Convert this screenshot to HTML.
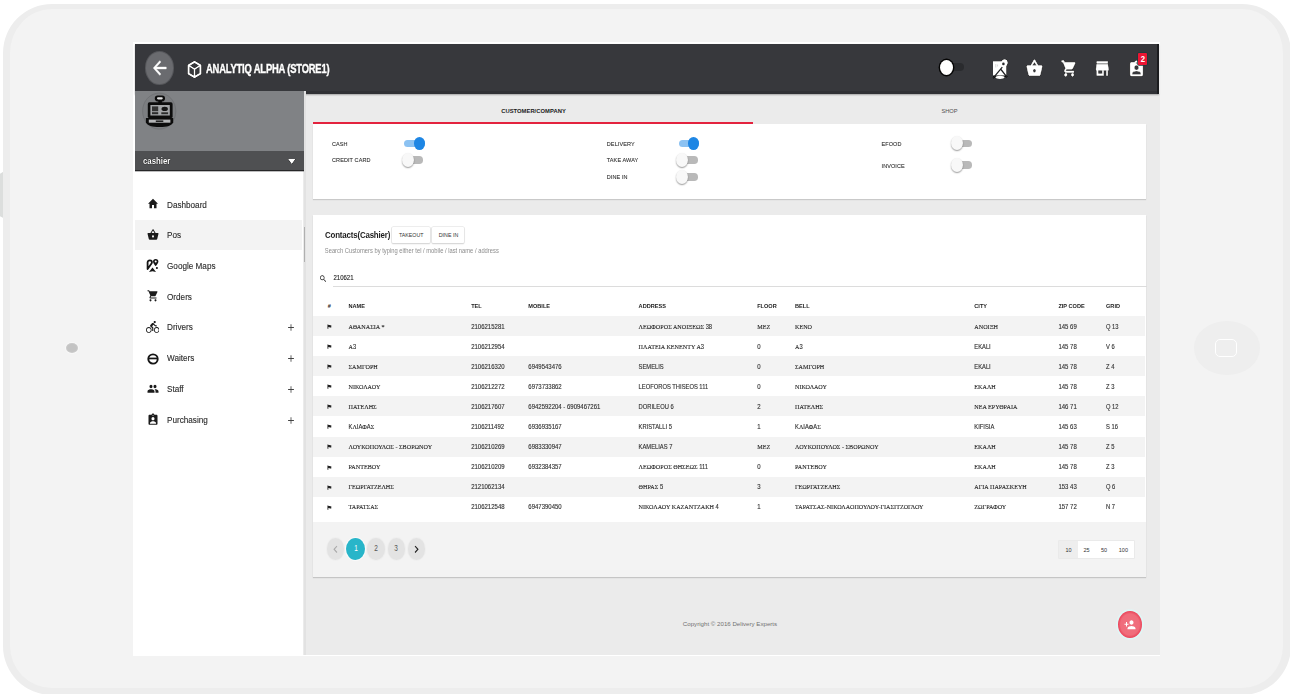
<!DOCTYPE html>
<html lang="el"><head><meta charset="utf-8"><title>Contacts (Cashier)</title>
<style>
html,body{margin:0;padding:0;background:#fff;}
body{width:1290px;height:694px;position:relative;overflow:hidden;font-family:"Liberation Sans",sans-serif;}
.a{position:absolute;display:block;}
.t{white-space:nowrap;line-height:12px;height:12px;font-size:5.500px;color:#444;}
.b{font-weight:bold;}
.ttl{font-weight:bold;color:#fff;font-size:13px;line-height:18px;height:18px;transform-origin:0 50%;transform:scaleX(.722);text-shadow:0 0 1px #000,0 0 1px #000;letter-spacing:-.25px;-webkit-text-stroke:.5px #fff}
.m{font-size:9.200px;color:#2b2b2b;-webkit-text-stroke:.12px #2b2b2b;transform-origin:0 50%;transform:scale(.888,1.07)}
.lab{font-size:5.500px;color:#333;letter-spacing:.1px;-webkit-text-stroke:.1px #333}
.h{font-size:8.800px;color:#1d1d1d;font-weight:bold;letter-spacing:-.2px;transform-origin:0 50%;transform:scale(.9,1.12)}
.sh{filter:drop-shadow(0 0 .7px #000) drop-shadow(0 0 .6px #000) drop-shadow(0 0 .4px #000)}
.sub{font-size:5.800px;color:#8c8c8c;}
.th{font-weight:bold;color:#222;font-size:5.600px;}
.c{font-size:5.800px;color:#333;-webkit-text-stroke:.12px #333}
.n{font-size:6px}
.c,.th,.lab,.sub{transform:scaleY(1.1)}
.gr{font-family:"Liberation Serif",serif;font-size:6.150px;color:#1f1f1f;-webkit-text-stroke:.1px #1f1f1f}
</style></head>
<body>
<div class="a" style="left:0.0px;top:171.8px;width:6.0px;height:46.2px;background:#dcdedd;clip-path:polygon(0 4%,55% 0,100% 0,100% 100%,55% 100%,0 96%)"></div>
<div class="a" style="left:3.200px;top:3.900px;width:1287.800px;height:691.100px;box-sizing:border-box;background:#f3f3f3;border:solid #ededed;border-width:5.200px 8.700px 7.200px 7.900px;border-radius:49px"></div>
<div class="a" style="left:66.7px;top:343.8px;width:10.4px;height:8.2px;border-radius:50%;background:#c3c3c3;box-shadow:0 0 0 1px #c9c9c9,0 0 0 2px #f8f8f8"></div>
<div class="a" style="left:1194.0px;top:321.0px;width:66.2px;height:53.6px;border-radius:50%;background:#eeeeee"></div>
<div class="a" style="left:1215.0px;top:339.4px;width:22.0px;height:17.5px;box-sizing:border-box;border:1.800px solid #fff;border-radius:5px"></div>
<div class="a" style="left:133.1px;top:41.9px;width:1026.5px;height:614.3px;background:#fff"></div>
<div class="a" style="left:303.0px;top:94.0px;width:856.5px;height:560.5px;background:#ebebeb"></div>
<div class="a" style="left:135.0px;top:43.9px;width:1023.8px;height:50.6px;background:#303135;box-shadow:0 1px 1.5px rgba(0,0,0,.3)"></div>
<div class="a" style="left:135.0px;top:43.9px;width:1023.8px;height:46.9px;background:#37383c"></div>
<div class="a" style="left:1156.9px;top:43.9px;width:1.9px;height:50.6px;background:#1b1c1f"></div>
<div class="a" style="left:145.7px;top:52.1px;width:27.8px;height:32.2px;border-radius:50%;background:#6a6b6f;box-shadow:0 0 0 1px #56575b"></div>
<svg class="a " style="left:149.8px;top:57.2px;width:19.5px;height:22.0px" viewBox="0 0 24 24" preserveAspectRatio="none"><path fill="#fff" stroke="#fff" stroke-width=".5" d="M20 11H7.83l5.59-5.59L12 4l-8 8 8 8 1.41-1.41L7.83 13H20v-2z"/></svg>
<svg class="a sh" style="left:187.200px;top:60.200px;width:15px;height:19px" viewBox="0 0 16 20"><path d="M8 1.800L14.300 5.600V14.400L8 18.200L1.700 14.400V5.600Z" fill="none" stroke="#fff" stroke-width="2.100" stroke-linejoin="round"/><path d="M1.700 5.600L8 9.600L14.300 5.600M8 9.600V18.200" fill="none" stroke="#fff" stroke-width="1.700"/></svg>
<div class="a t ttl" style="left:206.200px;top:59.800px;">ANALYTIQ ALPHA (STORE1)</div>
<div class="a" style="left:946.0px;top:62.8px;width:17.5px;height:8.6px;background:#2a2b2e;border-radius:4.300px"></div>
<div class="a" style="left:939.7px;top:59.6px;width:13.6px;height:15.8px;border-radius:50%;background:#fff;box-shadow:0 0 0 1.400px #050505"></div>
<svg class="a sh" style="left:991px;top:57px;width:19px;height:24px" viewBox="0 0 19 24"><path d="M2 4.200h8.500a3.300 3.300 0 0 1 6.300 1.200c0 1.200-.7 2.500-1.400 3.600V18.500H2z" fill="#fff"/><ellipse cx="9" cy="20.300" rx="4.600" ry="1.600" fill="#fff"/><circle cx="12.400" cy="6.900" r="1.300" fill="#2a2b2e"/><path d="M2.300 20.800L11.300 10.200M10 12.500l5.800 7.300" stroke="#1f2023" stroke-width="1.250" fill="none"/><path d="M4.800 7v3.500M6.600 7.500v2" stroke="#c9c9c9" stroke-width=".7"/></svg>
<svg class="a sh" style="left:1025.8px;top:58.1px;width:16.9px;height:20.3px" viewBox="0 0 24 24" preserveAspectRatio="none"><path fill="#fff" stroke="#fff" stroke-width=".7" d="M17.21 9l-4.38-6.56c-.19-.28-.51-.42-.83-.42-.32 0-.64.14-.83.43L6.79 9H2c-.55 0-1 .45-1 1 0 .09.01.18.04.27l2.54 9.27c.23.84 1 1.46 1.92 1.46h13c.92 0 1.69-.62 1.93-1.46l2.54-9.27L23 10c0-.55-.45-1-1-1h-4.79zM9 9l3-4.4L15 9H9zm3 8c-1.1 0-2-.9-2-2s.9-2 2-2 2 .9 2 2-.9 2-2 2z"/></svg>
<svg class="a sh" style="left:1060.8px;top:58.6px;width:16.3px;height:19.0px" viewBox="0 0 24 24" preserveAspectRatio="none"><path fill="#fff" stroke="#fff" stroke-width=".7" d="M7 18c-1.1 0-1.99.9-1.99 2S5.9 22 7 22s2-.9 2-2-.9-2-2-2zM1 2v2h2l3.6 7.59-1.35 2.45c-.16.28-.25.61-.25.96 0 1.1.9 2 2 2h12v-2H7.42c-.14 0-.25-.11-.25-.25l.03-.12.9-1.63h7.45c.75 0 1.41-.41 1.75-1.03l3.58-6.49c.08-.14.12-.31.12-.48 0-.55-.45-1-1-1H5.21l-.94-2H1zm16 16c-1.1 0-1.99.9-1.99 2s.89 2 1.99 2 2-.9 2-2-.9-2-2-2z"/></svg>
<svg class="a sh" style="left:1094.3px;top:57.5px;width:16.5px;height:21.1px" viewBox="0 0 24 24" preserveAspectRatio="none"><path fill="#fff" stroke="#fff" stroke-width=".7" d="M20 4H4v2h16V4zm1 10v-2l-1-5H4l-1 5v2h1v6h10v-6h4v6h2v-6h1zm-9 4H6v-4h6v4z"/></svg>
<svg class="a sh" style="left:1128.0px;top:59.5px;width:17.0px;height:18.4px" viewBox="0 0 24 24" preserveAspectRatio="none"><path fill="#fff" stroke="#fff" stroke-width=".7" d="M19 3h-4.18C14.4 1.84 13.3 1 12 1c-1.3 0-2.4.84-2.82 2H5c-1.1 0-2 .9-2 2v14c0 1.1.9 2 2 2h14c1.1 0 2-.9 2-2V5c0-1.1-.9-2-2-2zm-7 0c.55 0 1 .45 1 1s-.45 1-1 1-1-.45-1-1 .45-1 1-1zm0 4c1.66 0 3 1.34 3 3s-1.34 3-3 3-3-1.34-3-3 1.34-3 3-3zm6 12H6v-1.4c0-2 4-3.1 6-3.1s6 1.1 6 3.1V19z"/></svg>
<div class="a" style="left:1137.8px;top:52.9px;width:9.6px;height:12.3px;background:#ec1533;border-radius:1px;box-shadow:0 0 0 .8px #1e3a3c"></div>
<div class="a t b" style="left:1142.6px;top:53.1px;transform:translateX(-50%);color:#fff;font-size:9px;transform:translateX(-50%) scaleX(.86)">2</div>
<div class="a" style="left:303.5px;top:90.5px;width:2.2px;height:564.0px;background:#e2e2e2"></div>
<div class="a" style="left:304.2px;top:227.0px;width:1.3px;height:35.0px;background:#b0b0b0"></div>
<div class="a" style="left:135.0px;top:90.5px;width:168.5px;height:60.3px;background:#808285"></div>
<div class="a" style="left:135.0px;top:150.6px;width:168.5px;height:19.6px;background:#4f5052;box-shadow:0 1.300px 0 #262628"></div>
<svg class="a" style="left:142px;top:92px;width:35px;height:38px" viewBox="0 0 35 38"><ellipse cx="17.200" cy="19.100" rx="16.600" ry="18" fill="#7c7e81" stroke="#727477" stroke-width="1"/><g fill="#0c0c0c"><rect x="12.800" y="3.400" width="10.200" height="6" rx="2.800"/><rect x="16.300" y="9" width="3.600" height="2.500"/><rect x="5.800" y="10.300" width="24.800" height="15.800" rx="1.600"/><path d="M3.900 26h27.300v4.500c-1.500 3-6 4.600-13.600 4.600S5.400 33.500 3.900 30.500z"/></g><rect x="15" y="5.200" width="5.800" height="2.200" rx="1.100" fill="#e2e2e2"/><rect x="8.400" y="13" width="19.400" height="10.500" fill="#a3a5a7"/><g fill="#161616"><rect x="10" y="14.400" width="6.200" height="4.800" opacity=".8"/><rect x="10" y="20.200" width="6.200" height="2" opacity=".85"/><ellipse cx="22.700" cy="16.900" rx="3.200" ry="2.100"/><rect x="19.300" y="20.300" width="6.800" height="1.900" opacity=".85"/></g><rect x="6.800" y="27.600" width="21.600" height="3.100" fill="#b4b5b7"/><rect x="13.800" y="28.500" width="7.500" height="1.400" fill="#111"/><path d="M8 31.400c2.500 1.100 5.500 1.500 9.600 1.500s7.100-.4 9.600-1.500v-.7H8z" fill="#b4b5b7" opacity=".0"/></svg>
<div class="a t b" style="left:143.3px;top:154.7px;color:#fff;font-size:9.900px;transform-origin:0 50%;transform:scaleX(.79);text-shadow:0 0 1px #000,0 0 1px #000">cashier</div>
<svg class="a sh" style="left:283.1px;top:149.4px;width:17.5px;height:24.0px" viewBox="0 0 24 24" preserveAspectRatio="none"><path fill="#fff"  d="M7 10l5 5 5-5z"/></svg>
<div class="a" style="left:135.0px;top:219.6px;width:167.3px;height:30.1px;background:#f3f3f3"></div>
<svg class="a " style="left:146.7px;top:197.4px;width:12.0px;height:13.5px" viewBox="0 0 24 24" preserveAspectRatio="none"><path fill="#1b1b1b"  d="M10 20v-6h4v6h5v-8h3L12 3 2 12h3v8z"/></svg>
<div class="a t m" style="left:167.4px;top:198.6px;">Dashboard</div>
<svg class="a " style="left:146.7px;top:227.8px;width:12.0px;height:13.5px" viewBox="0 0 24 24" preserveAspectRatio="none"><path fill="#1b1b1b"  d="M17.21 9l-4.38-6.56c-.19-.28-.51-.42-.83-.42-.32 0-.64.14-.83.43L6.79 9H2c-.55 0-1 .45-1 1 0 .09.01.18.04.27l2.54 9.27c.23.84 1 1.46 1.92 1.46h13c.92 0 1.69-.62 1.93-1.46l2.54-9.27L23 10c0-.55-.45-1-1-1h-4.79zM9 9l3-4.4L15 9H9zm3 8c-1.1 0-2-.9-2-2s.9-2 2-2 2 .9 2 2-.9 2-2 2z"/></svg>
<div class="a t m" style="left:167.4px;top:228.9px;">Pos</div>
<svg class="a" style="left:145px;top:257.0px;width:15px;height:16px" viewBox="0 0 15 16"><path d="M2.600 12V5.300C2.600 3.500 4.600 3.100 6 3.600 7.100 4.100 7.200 5.500 6.500 6.500z" fill="none" stroke="#151515" stroke-width="1.800" stroke-linejoin="round"/><path d="M10.700 1.900a2.700 2.700 0 0 1 2.700 2.700c0 2-2.700 4.700-2.700 4.700S8 6.600 8 4.600a2.700 2.700 0 0 1 2.700-2.700z" fill="#151515"/><circle cx="10.700" cy="4.600" r="1" fill="#fff"/><circle cx="11.900" cy="11" r="1.050" fill="#151515"/><path d="M4 15L7.500 10.400 11 15 7.500 14.300z" fill="#151515"/></svg>
<div class="a t m" style="left:167.4px;top:260.2px;">Google Maps</div>
<svg class="a " style="left:146.7px;top:289.4px;width:12.0px;height:13.5px" viewBox="0 0 24 24" preserveAspectRatio="none"><path fill="#1b1b1b"  d="M7 18c-1.1 0-1.99.9-1.99 2S5.9 22 7 22s2-.9 2-2-.9-2-2-2zM1 2v2h2l3.6 7.59-1.35 2.45c-.16.28-.25.61-.25.96 0 1.1.9 2 2 2h12v-2H7.42c-.14 0-.25-.11-.25-.25l.03-.12.9-1.63h7.45c.75 0 1.41-.41 1.75-1.03l3.58-6.49c.08-.14.12-.31.12-.48 0-.55-.45-1-1-1H5.21l-.94-2H1zm16 16c-1.1 0-1.99.9-1.99 2s.89 2 1.99 2 2-.9 2-2-.9-2-2-2z"/></svg>
<div class="a t m" style="left:167.4px;top:290.5px;">Orders</div>
<svg class="a " style="left:145.9px;top:319.9px;width:13.5px;height:14.0px" viewBox="0 0 24 24" preserveAspectRatio="none"><path fill="#1b1b1b"  d="M15.5 5.500c1.100 0 2-.9 2-2s-.9-2-2-2-2 .9-2 2 .9 2 2 2zM5 12c-2.800 0-5 2.200-5 5s2.200 5 5 5 5-2.200 5-5-2.200-5-5-5zm0 8.500c-1.900 0-3.500-1.600-3.500-3.500s1.600-3.500 3.500-3.500 3.500 1.600 3.500 3.500-1.600 3.500-3.500 3.500zm5.800-10l2.400-2.400.8.8c1.300 1.300 3 2.100 5.100 2.100V9c-1.500 0-2.700-.6-3.600-1.500l-1.900-1.900c-.5-.4-1-.6-1.600-.6s-1.100.2-1.400.6L7.800 8.400c-.4.4-.6.9-.6 1.400 0 .6.200 1.100.6 1.400L11 14v5h2v-6.200l-2.200-2.300zM19 12c-2.800 0-5 2.200-5 5s2.200 5 5 5 5-2.200 5-5-2.200-5-5-5zm0 8.500c-1.900 0-3.500-1.600-3.500-3.500s1.600-3.500 3.500-3.500 3.500 1.600 3.500 3.500-1.600 3.500-3.500 3.500z"/></svg>
<div class="a t m" style="left:167.4px;top:321.3px;">Drivers</div>
<svg class="a " style="left:286.0px;top:322.1px;width:10.0px;height:11.0px" viewBox="0 0 24 24" preserveAspectRatio="none"><path fill="#444"  d="M19 13h-6v6h-2v-6H5v-2h6V5h2v6h6v2z"/></svg>
<svg class="a" style="left:146.600px;top:352.5px;width:12px;height:12px" viewBox="0 0 12 12"><ellipse cx="6" cy="6" rx="4.700" ry="4.600" fill="none" stroke="#151515" stroke-width="1.900"/><path d="M1.500 4.600h9v1.700h-9z" fill="#151515"/></svg>
<div class="a t m" style="left:167.4px;top:352.2px;">Waiters</div>
<svg class="a " style="left:286.0px;top:353.0px;width:10.0px;height:11.0px" viewBox="0 0 24 24" preserveAspectRatio="none"><path fill="#444"  d="M19 13h-6v6h-2v-6H5v-2h6V5h2v6h6v2z"/></svg>
<svg class="a " style="left:146.7px;top:381.8px;width:12.0px;height:13.5px" viewBox="0 0 24 24" preserveAspectRatio="none"><path fill="#1b1b1b"  d="M16 11c1.66 0 2.99-1.34 2.99-3S17.66 5 16 5c-1.66 0-3 1.34-3 3s1.34 3 3 3zm-8 0c1.66 0 2.99-1.34 2.99-3S9.66 5 8 5C6.34 5 5 6.34 5 8s1.34 3 3 3zm0 2c-2.33 0-7 1.17-7 3.5V19h14v-2.5c0-2.33-4.67-3.500-7-3.500zm8 0c-.29 0-.62.02-.97.05 1.16.84 1.970 1.970 1.970 3.450V19h6v-2.500c0-2.330-4.670-3.500-7-3.500z"/></svg>
<div class="a t m" style="left:167.4px;top:382.9px;">Staff</div>
<svg class="a " style="left:286.0px;top:383.7px;width:10.0px;height:11.0px" viewBox="0 0 24 24" preserveAspectRatio="none"><path fill="#444"  d="M19 13h-6v6h-2v-6H5v-2h6V5h2v6h6v2z"/></svg>
<svg class="a " style="left:146.7px;top:412.9px;width:12.0px;height:13.5px" viewBox="0 0 24 24" preserveAspectRatio="none"><path fill="#1b1b1b"  d="M19 3h-4.18C14.4 1.84 13.3 1 12 1c-1.3 0-2.4.84-2.82 2H5c-1.1 0-2 .9-2 2v14c0 1.1.9 2 2 2h14c1.1 0 2-.9 2-2V5c0-1.1-.9-2-2-2zm-7 0c.55 0 1 .45 1 1s-.45 1-1 1-1-.45-1-1 .45-1 1-1zm0 4c1.66 0 3 1.34 3 3s-1.34 3-3 3-3-1.34-3-3 1.34-3 3-3zm6 12H6v-1.4c0-2 4-3.1 6-3.1s6 1.1 6 3.1V19z"/></svg>
<div class="a t m" style="left:167.4px;top:414.0px;">Purchasing</div>
<svg class="a " style="left:286.0px;top:414.8px;width:10.0px;height:11.0px" viewBox="0 0 24 24" preserveAspectRatio="none"><path fill="#444"  d="M19 13h-6v6h-2v-6H5v-2h6V5h2v6h6v2z"/></svg>
<div class="a t b" style="left:533.5px;top:105.3px;transform:translateX(-50%);color:#1a1a1a;font-size:5.800px;letter-spacing:.05px">CUSTOMER/COMPANY</div>
<div class="a t " style="left:949.5px;top:105.3px;transform:translateX(-50%);color:#505050;font-size:5.700px">SHOP</div>
<div class="a" style="left:313.1px;top:123.8px;width:833.3px;height:75.3px;background:#fff;box-shadow:0 1px 1px rgba(0,0,0,.14)"></div>
<div class="a" style="left:313.1px;top:121.6px;width:440.4px;height:2.6px;background:#e3233e"></div>
<div class="a t lab" style="left:332.0px;top:137.8px;">CASH</div>
<div class="a t lab" style="left:332.0px;top:154.0px;">CREDIT CARD</div>
<div class="a t lab" style="left:606.8px;top:137.8px;">DELIVERY</div>
<div class="a t lab" style="left:606.8px;top:154.0px;">TAKE AWAY</div>
<div class="a t lab" style="left:606.8px;top:171.0px;">DINE IN</div>
<div class="a t lab" style="left:881.5px;top:137.8px;">EFOOD</div>
<div class="a t lab" style="left:881.5px;top:159.6px;">INVOICE</div>
<div class="a" style="left:404.4px;top:139.6px;width:20.5px;height:7.2px;background:#8cc2f2;border-radius:3.600px"></div>
<div class="a" style="left:413.7px;top:136.5px;width:11.4px;height:13.0px;border-radius:50%;background:#1e86e4"></div>
<div class="a" style="left:407.9px;top:156.3px;width:15.2px;height:7.6px;background:#b9b9b9;border-radius:3.800px"></div>
<div class="a" style="left:401.9px;top:153.0px;width:12.0px;height:14.0px;border-radius:50%;background:#f8f8f8;box-shadow:0 1px 1.500px rgba(0,0,0,.4)"></div>
<div class="a" style="left:678.8px;top:139.6px;width:20.5px;height:7.2px;background:#8cc2f2;border-radius:3.600px"></div>
<div class="a" style="left:688.1px;top:136.5px;width:11.4px;height:13.0px;border-radius:50%;background:#1e86e4"></div>
<div class="a" style="left:682.4px;top:156.3px;width:15.2px;height:7.6px;background:#b9b9b9;border-radius:3.800px"></div>
<div class="a" style="left:676.4px;top:153.0px;width:12.0px;height:14.0px;border-radius:50%;background:#f8f8f8;box-shadow:0 1px 1.500px rgba(0,0,0,.4)"></div>
<div class="a" style="left:682.4px;top:173.3px;width:15.2px;height:7.6px;background:#b9b9b9;border-radius:3.800px"></div>
<div class="a" style="left:676.4px;top:170.0px;width:12.0px;height:14.0px;border-radius:50%;background:#f8f8f8;box-shadow:0 1px 1.500px rgba(0,0,0,.4)"></div>
<div class="a" style="left:956.7px;top:139.7px;width:15.2px;height:7.6px;background:#b9b9b9;border-radius:3.800px"></div>
<div class="a" style="left:950.7px;top:136.4px;width:12.0px;height:14.0px;border-radius:50%;background:#f8f8f8;box-shadow:0 1px 1.500px rgba(0,0,0,.4)"></div>
<div class="a" style="left:956.7px;top:161.3px;width:15.2px;height:7.6px;background:#b9b9b9;border-radius:3.800px"></div>
<div class="a" style="left:950.7px;top:158.0px;width:12.0px;height:14.0px;border-radius:50%;background:#f8f8f8;box-shadow:0 1px 1.500px rgba(0,0,0,.4)"></div>
<div class="a" style="left:313.1px;top:215.0px;width:833.3px;height:362.4px;background:#f3f3f3;box-shadow:0 1px 1px rgba(0,0,0,.16)"></div>
<div class="a" style="left:313.1px;top:215.0px;width:833.3px;height:307.3px;background:#fff"></div>
<div class="a t h" style="left:324.8px;top:228.7px;">Contacts(Cashier)</div>
<div class="a" style="left:392.3px;top:226.8px;width:37.7px;height:16.6px;background:#fff;box-shadow:0 0 0 .6px #dcdcdc,0 1px 1.500px rgba(0,0,0,.2);border-radius:1px"></div>
<div class="a t " style="left:411.2px;top:229.3px;transform:translateX(-50%);font-size:5.300px;color:#333">TAKEOUT</div>
<div class="a" style="left:432.4px;top:226.8px;width:32.1px;height:16.6px;background:#fff;box-shadow:0 0 0 .6px #dcdcdc,0 1px 1.500px rgba(0,0,0,.2);border-radius:1px"></div>
<div class="a t " style="left:448.5px;top:229.3px;transform:translateX(-50%);font-size:5.300px;color:#333">DINE IN</div>
<div class="a t sub" style="left:324.8px;top:244.6px;">Search Customers by typing either tel / mobile / last name / address</div>
<svg class="a " style="left:319.2px;top:274.4px;width:8.3px;height:9.3px" viewBox="0 0 24 24" preserveAspectRatio="none"><path fill="#222"  d="M15.5 14h-.79l-.28-.27C15.410 12.590 16 11.110 16 9.500 16 5.910 13.090 3 9.500 3S3 5.910 3 9.500 5.910 16 9.500 16c1.610 0 3.090-.59 4.230-1.570l.27.28v.79l5 4.990L20.490 19l-4.990-5zm-6 0C7.010 14 5 11.990 5 9.500S7.010 5 9.500 5 14 7.010 14 9.500 11.990 14 9.500 14z"/></svg>
<div class="a t c" style="left:333.5px;top:272.0px;color:#222;font-size:6px">210621</div>
<div class="a" style="left:333.0px;top:285.8px;width:813.5px;height:1.0px;background:#dcdcdc"></div>
<div class="a t th" style="left:329.2px;top:300.2px;transform:translateX(-50%);">#</div>
<div class="a t th" style="left:348.5px;top:300.2px;">NAME</div>
<div class="a t th" style="left:471.2px;top:300.2px;">TEL</div>
<div class="a t th" style="left:528.3px;top:300.2px;">MOBILE</div>
<div class="a t th" style="left:638.6px;top:300.2px;">ADDRESS</div>
<div class="a t th" style="left:757.2px;top:300.2px;">FLOOR</div>
<div class="a t th" style="left:795.0px;top:300.2px;">BELL</div>
<div class="a t th" style="left:974.3px;top:300.2px;">CITY</div>
<div class="a t th" style="left:1058.4px;top:300.2px;">ZIP CODE</div>
<div class="a t th" style="left:1106.0px;top:300.2px;">GRID</div>
<div class="a" style="left:313.1px;top:316.0px;width:831.6px;height:20.1px;background:#f3f3f3"></div>
<svg class="a" style="left:327.300px;top:323.9px;width:4.600px;height:5.200px" viewBox="0 0 6 6"><path d="M.6 .3h1.200v5.400H.6zM1.800 .8h1.800l.4 .600h1.600v2.800H3.400l-.4-.6H1.800z" fill="#222"/></svg>
<div class="a t c" style="left:348.5px;top:320.5px;"><span class="gr">ΑΘΑΝΑΣΙΑ *</span></div>
<div class="a t c n" style="left:471.2px;top:320.5px;">2106215281</div>
<div class="a t c" style="left:638.6px;top:320.5px;"><span class="gr">ΛΕΩΦΟΡΟΣ ΑΝΟΙΞΕΩΣ </span>38</div>
<div class="a t c" style="left:757.2px;top:320.5px;"><span class="gr">ΜΕΖ</span></div>
<div class="a t c" style="left:795.0px;top:320.5px;"><span class="gr">ΚΕΝΟ</span></div>
<div class="a t c" style="left:974.3px;top:320.5px;"><span class="gr">ΑΝΟΙΞΗ</span></div>
<div class="a t c n" style="left:1058.4px;top:320.5px;">145 69</div>
<div class="a t c" style="left:1106.0px;top:320.5px;">Q 13</div>
<svg class="a" style="left:327.300px;top:344.0px;width:4.600px;height:5.200px" viewBox="0 0 6 6"><path d="M.6 .3h1.200v5.400H.6zM1.800 .8h1.800l.4 .600h1.600v2.800H3.400l-.4-.6H1.800z" fill="#222"/></svg>
<div class="a t c" style="left:348.5px;top:340.6px;"><span class="gr">Α</span>3</div>
<div class="a t c n" style="left:471.2px;top:340.6px;">2106212954</div>
<div class="a t c" style="left:638.6px;top:340.6px;"><span class="gr">ΠΛΑΤΕΙΑ ΚΕΝΕΝΤΥ Α</span>3</div>
<div class="a t c n" style="left:757.2px;top:340.6px;">0</div>
<div class="a t c" style="left:795.0px;top:340.6px;"><span class="gr">Α</span>3</div>
<div class="a t c" style="left:974.3px;top:340.6px;">EKALI</div>
<div class="a t c n" style="left:1058.4px;top:340.6px;">145 78</div>
<div class="a t c" style="left:1106.0px;top:340.6px;">V 6</div>
<div class="a" style="left:313.1px;top:356.2px;width:831.6px;height:20.1px;background:#f3f3f3"></div>
<svg class="a" style="left:327.300px;top:364.1px;width:4.600px;height:5.200px" viewBox="0 0 6 6"><path d="M.6 .3h1.200v5.400H.6zM1.800 .8h1.800l.4 .600h1.600v2.800H3.400l-.4-.6H1.800z" fill="#222"/></svg>
<div class="a t c" style="left:348.5px;top:360.7px;"><span class="gr">ΣΑΜΓΟΡΗ</span></div>
<div class="a t c n" style="left:471.2px;top:360.7px;">2106216320</div>
<div class="a t c n" style="left:528.3px;top:360.7px;">6949543476</div>
<div class="a t c" style="left:638.6px;top:360.7px;">SEMELIS</div>
<div class="a t c n" style="left:757.2px;top:360.7px;">0</div>
<div class="a t c" style="left:795.0px;top:360.7px;"><span class="gr">ΣΑΜΓΟΡΗ</span></div>
<div class="a t c" style="left:974.3px;top:360.7px;">EKALI</div>
<div class="a t c n" style="left:1058.4px;top:360.7px;">145 78</div>
<div class="a t c" style="left:1106.0px;top:360.7px;">Z 4</div>
<svg class="a" style="left:327.300px;top:384.1px;width:4.600px;height:5.200px" viewBox="0 0 6 6"><path d="M.6 .3h1.200v5.400H.6zM1.800 .8h1.800l.4 .600h1.600v2.800H3.400l-.4-.6H1.800z" fill="#222"/></svg>
<div class="a t c" style="left:348.5px;top:380.7px;"><span class="gr">ΝΙΚΟΛΑΟΥ</span></div>
<div class="a t c n" style="left:471.2px;top:380.7px;">2106212272</div>
<div class="a t c n" style="left:528.3px;top:380.7px;">6973733862</div>
<div class="a t c" style="left:638.6px;top:380.7px;">LEOFOROS THISEOS 111</div>
<div class="a t c n" style="left:757.2px;top:380.7px;">0</div>
<div class="a t c" style="left:795.0px;top:380.7px;"><span class="gr">ΝΙΚΟΛΑΟΥ</span></div>
<div class="a t c" style="left:974.3px;top:380.7px;"><span class="gr">ΕΚΑΛΗ</span></div>
<div class="a t c n" style="left:1058.4px;top:380.7px;">145 78</div>
<div class="a t c" style="left:1106.0px;top:380.7px;">Z 3</div>
<div class="a" style="left:313.1px;top:396.3px;width:831.6px;height:20.1px;background:#f3f3f3"></div>
<svg class="a" style="left:327.300px;top:404.2px;width:4.600px;height:5.200px" viewBox="0 0 6 6"><path d="M.6 .3h1.200v5.400H.6zM1.800 .8h1.800l.4 .600h1.600v2.800H3.400l-.4-.6H1.800z" fill="#222"/></svg>
<div class="a t c" style="left:348.5px;top:400.8px;"><span class="gr">ΠΑΤΕΛΗΣ</span></div>
<div class="a t c n" style="left:471.2px;top:400.8px;">2106217607</div>
<div class="a t c n" style="left:528.3px;top:400.8px;">6942592204 - 6909467261</div>
<div class="a t c" style="left:638.6px;top:400.8px;">DORILEOU 6</div>
<div class="a t c n" style="left:757.2px;top:400.8px;">2</div>
<div class="a t c" style="left:795.0px;top:400.8px;"><span class="gr">ΠΑΤΕΛΗΣ</span></div>
<div class="a t c" style="left:974.3px;top:400.8px;"><span class="gr">ΝΕΑ ΕΡΥΘΡΑΙΑ</span></div>
<div class="a t c n" style="left:1058.4px;top:400.8px;">146 71</div>
<div class="a t c" style="left:1106.0px;top:400.8px;">Q 12</div>
<svg class="a" style="left:327.300px;top:424.3px;width:4.600px;height:5.200px" viewBox="0 0 6 6"><path d="M.6 .3h1.200v5.400H.6zM1.800 .8h1.800l.4 .600h1.600v2.800H3.400l-.4-.6H1.800z" fill="#222"/></svg>
<div class="a t c" style="left:348.5px;top:420.9px;">K<span class="gr">Λ</span>IA<span class="gr">Φ</span>A<span class="gr">Σ</span></div>
<div class="a t c n" style="left:471.2px;top:420.9px;">2106211492</div>
<div class="a t c n" style="left:528.3px;top:420.9px;">6936935167</div>
<div class="a t c" style="left:638.6px;top:420.9px;">KRISTALLI 5</div>
<div class="a t c n" style="left:757.2px;top:420.9px;">1</div>
<div class="a t c" style="left:795.0px;top:420.9px;">K<span class="gr">Λ</span>IA<span class="gr">Φ</span>A<span class="gr">Σ</span></div>
<div class="a t c" style="left:974.3px;top:420.9px;">KIFISIA</div>
<div class="a t c n" style="left:1058.4px;top:420.9px;">145 63</div>
<div class="a t c" style="left:1106.0px;top:420.9px;">S 16</div>
<div class="a" style="left:313.1px;top:436.5px;width:831.6px;height:20.1px;background:#f3f3f3"></div>
<svg class="a" style="left:327.300px;top:444.4px;width:4.600px;height:5.200px" viewBox="0 0 6 6"><path d="M.6 .3h1.200v5.400H.6zM1.800 .8h1.800l.4 .600h1.600v2.800H3.400l-.4-.6H1.800z" fill="#222"/></svg>
<div class="a t c" style="left:348.5px;top:441.0px;"><span class="gr">ΛΟΥΚΟΠΟΥΛΟΣ - ΣΒΟΡΩΝΟΥ</span></div>
<div class="a t c n" style="left:471.2px;top:441.0px;">2106210269</div>
<div class="a t c n" style="left:528.3px;top:441.0px;">6983330947</div>
<div class="a t c" style="left:638.6px;top:441.0px;">KAMELIAS 7</div>
<div class="a t c" style="left:757.2px;top:441.0px;"><span class="gr">ΜΕΖ</span></div>
<div class="a t c" style="left:795.0px;top:441.0px;"><span class="gr">ΛΟΥΚΟΠΟΥΛΟΣ - ΣΒΟΡΩΝΟΥ</span></div>
<div class="a t c" style="left:974.3px;top:441.0px;"><span class="gr">ΕΚΑΛΗ</span></div>
<div class="a t c n" style="left:1058.4px;top:441.0px;">145 78</div>
<div class="a t c" style="left:1106.0px;top:441.0px;">Z 5</div>
<svg class="a" style="left:327.300px;top:464.5px;width:4.600px;height:5.200px" viewBox="0 0 6 6"><path d="M.6 .3h1.200v5.400H.6zM1.800 .8h1.800l.4 .600h1.600v2.800H3.400l-.4-.6H1.800z" fill="#222"/></svg>
<div class="a t c" style="left:348.5px;top:461.1px;"><span class="gr">ΡΑΝΤΕΒΟΥ</span></div>
<div class="a t c n" style="left:471.2px;top:461.1px;">2106210209</div>
<div class="a t c n" style="left:528.3px;top:461.1px;">6932384357</div>
<div class="a t c" style="left:638.6px;top:461.1px;"><span class="gr">ΛΕΩΦΟΡΟΣ ΘΗΣΕΩΣ </span>111</div>
<div class="a t c n" style="left:757.2px;top:461.1px;">0</div>
<div class="a t c" style="left:795.0px;top:461.1px;"><span class="gr">ΡΑΝΤΕΒΟΥ</span></div>
<div class="a t c" style="left:974.3px;top:461.1px;"><span class="gr">ΕΚΑΛΗ</span></div>
<div class="a t c n" style="left:1058.4px;top:461.1px;">145 78</div>
<div class="a t c" style="left:1106.0px;top:461.1px;">Z 3</div>
<div class="a" style="left:313.1px;top:476.6px;width:831.6px;height:20.1px;background:#f3f3f3"></div>
<svg class="a" style="left:327.300px;top:484.5px;width:4.600px;height:5.200px" viewBox="0 0 6 6"><path d="M.6 .3h1.200v5.400H.6zM1.800 .8h1.800l.4 .600h1.600v2.800H3.400l-.4-.6H1.800z" fill="#222"/></svg>
<div class="a t c" style="left:348.5px;top:481.1px;"><span class="gr">ΓΕΩΡΓΑΤΖΕΛΗΣ</span></div>
<div class="a t c n" style="left:471.2px;top:481.1px;">2121062134</div>
<div class="a t c" style="left:638.6px;top:481.1px;"><span class="gr">ΘΗΡΑΣ </span>5</div>
<div class="a t c n" style="left:757.2px;top:481.1px;">3</div>
<div class="a t c" style="left:795.0px;top:481.1px;"><span class="gr">ΓΕΩΡΓΑΤΖΕΛΗΣ</span></div>
<div class="a t c" style="left:974.3px;top:481.1px;"><span class="gr">ΑΓΙΑ ΠΑΡΑΣΚΕΥΗ</span></div>
<div class="a t c n" style="left:1058.4px;top:481.1px;">153 43</div>
<div class="a t c" style="left:1106.0px;top:481.1px;">Q 6</div>
<svg class="a" style="left:327.300px;top:504.6px;width:4.600px;height:5.200px" viewBox="0 0 6 6"><path d="M.6 .3h1.200v5.400H.6zM1.800 .8h1.800l.4 .600h1.600v2.800H3.400l-.4-.6H1.800z" fill="#222"/></svg>
<div class="a t c" style="left:348.5px;top:501.2px;"><span class="gr">ΤΑΡΑΤΣΑΣ</span></div>
<div class="a t c n" style="left:471.2px;top:501.2px;">2106212548</div>
<div class="a t c n" style="left:528.3px;top:501.2px;">6947390450</div>
<div class="a t c" style="left:638.6px;top:501.2px;"><span class="gr">ΝΙΚΟΛΑΟΥ ΚΑΖΑΝΤΖΑΚΗ </span>4</div>
<div class="a t c n" style="left:757.2px;top:501.2px;">1</div>
<div class="a t c" style="left:795.0px;top:501.2px;"><span class="gr">ΤΑΡΑΤΣΑΣ-ΝΙΚΟΛΑΟΠΟΥΛΟΥ-ΓΙΑΣΙΤΖΟΓΛΟΥ</span></div>
<div class="a t c" style="left:974.3px;top:501.2px;"><span class="gr">ΖΩΓΡΑΦΟΥ</span></div>
<div class="a t c n" style="left:1058.4px;top:501.2px;">157 72</div>
<div class="a t c" style="left:1106.0px;top:501.2px;">N 7</div>
<div class="a" style="left:327.0px;top:538.1px;width:17.4px;height:21.6px;border-radius:50%;background:#e3e3e3;box-shadow:0 0 0 1px #efefef"></div>
<div class="a" style="left:346.1px;top:537.9px;width:19.2px;height:22.0px;border-radius:50%;background:#28b5c9;box-shadow:0 0 0 1px #fafafa"></div>
<div class="a" style="left:367.3px;top:538.1px;width:17.4px;height:21.6px;border-radius:50%;background:#e3e3e3;box-shadow:0 0 0 1px #efefef"></div>
<div class="a" style="left:387.5px;top:538.1px;width:17.4px;height:21.6px;border-radius:50%;background:#e3e3e3;box-shadow:0 0 0 1px #efefef"></div>
<div class="a" style="left:407.8px;top:538.1px;width:17.4px;height:21.6px;border-radius:50%;background:#e3e3e3;box-shadow:0 0 0 1px #efefef"></div>
<svg class="a " style="left:329.1px;top:541.6px;width:13.0px;height:14.5px" viewBox="0 0 24 24" preserveAspectRatio="none"><path fill="#aaa"  d="M15.410 7.410L14 6l-6 6 6 6 1.410-1.410L10.830 12z"/></svg>
<div class="a t " style="left:355.7px;top:543.2px;transform:translateX(-50%);color:#fff;font-size:7.600px;transform:translateX(-50%) scale(.85,1.12)">1</div>
<div class="a t " style="left:376.0px;top:543.2px;transform:translateX(-50%);color:#555;font-size:7.600px;transform:translateX(-50%) scale(.85,1.12)">2</div>
<div class="a t " style="left:396.2px;top:543.2px;transform:translateX(-50%);color:#555;font-size:7.600px;transform:translateX(-50%) scale(.85,1.12)">3</div>
<svg class="a " style="left:410.4px;top:541.6px;width:13.0px;height:14.5px" viewBox="0 0 24 24" preserveAspectRatio="none"><path fill="#222"  d="M10 6L8.590 7.410 13.170 12l-4.580 4.590L10 18l6-6z"/></svg>
<div class="a" style="left:1059.3px;top:540.8px;width:74.6px;height:16.9px;background:#fff;box-shadow:0 0 0 .7px #e6e6e6"></div>
<div class="a" style="left:1059.3px;top:540.8px;width:18.7px;height:16.9px;background:#eeeeee"></div>
<div class="a t " style="left:1068.5px;top:544.0px;transform:translateX(-50%);color:#333;font-size:5.500px">10</div>
<div class="a t " style="left:1086.5px;top:544.0px;transform:translateX(-50%);color:#333;font-size:5.500px">25</div>
<div class="a t " style="left:1104.0px;top:544.0px;transform:translateX(-50%);color:#333;font-size:5.500px">50</div>
<div class="a t " style="left:1123.4px;top:544.0px;transform:translateX(-50%);color:#333;font-size:5.500px">100</div>
<div class="a t " style="left:730.0px;top:618.4px;transform:translateX(-50%);color:#727272;font-size:6.150px">Copyright © 2016 Delivery Experts</div>
<div class="a" style="left:1117.9px;top:610.7px;width:24.4px;height:27.6px;border-radius:50%;background:radial-gradient(closest-side,#f0717f 0,#f06c7b 78%,#ea4258 100%);box-shadow:0 0 0 1.800px #e0f6f6"></div>
<svg class="a " style="left:1123.6px;top:618.0px;width:12.0px;height:13.5px" viewBox="0 0 24 24" preserveAspectRatio="none"><path fill="#fff"  d="M15 12c2.21 0 4-1.79 4-4s-1.79-4-4-4-4 1.79-4 4 1.79 4 4 4zm-9-2V7H4v3H1v2h3v3h2v-3h3v-2H6zm9 4c-2.67 0-8 1.34-8 4v2h16v-2c0-2.66-5.33-4-8-4z"/></svg>
</body></html>
